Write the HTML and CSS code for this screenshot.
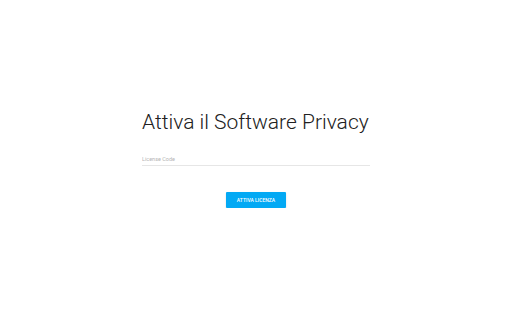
FILE: index.html
```html
<!DOCTYPE html>
<html lang="it">
<head>
    <meta charset="UTF-8">
    <meta name="viewport" content="width=device-width, initial-scale=1.0">
    <title>Attiva il Software Privacy</title>
    <link rel="stylesheet" href="styles.css">
</head>
<body>
    <div class="container">
        <h1>Attiva il Software Privacy</h1>
        <div class="field">
            <input type="text" id="licenseCode" placeholder="License Code">
        </div>
        <div class="actions">
            <button>Attiva licenza</button>
        </div>
    </div>
</body>
</html>
```

FILE: styles.css
```css
body {
    font-family: Roboto, "Noto Sans", sans-serif;
    background-color: #fff;
    color: #212121;
    margin: 0;
}
.container {
    width: 228px;
    margin: 0 auto;
    padding-top: 109px;
}
h1 {
    font-weight: 300;
    font-size: 21px;
    line-height: 26px;
    margin: 0;
    white-space: nowrap;
}
.field {
    margin-top: 21px;
}
input {
    display: block;
    width: 100%;
    box-sizing: border-box;
    border: none;
    border-bottom: 1px solid #e6e6e6;
    padding: 0 0 3px;
    font-family: inherit;
    font-size: 5.5px;
    color: #333;
    outline: none;
}
input::placeholder {
    color: #b5b5b5;
}
.actions {
    display: flex;
    justify-content: center;
    margin-top: 26px;
}
button {
    background-color: #03a9f4;
    color: #fff;
    border: none;
    width: 60px;
    height: 16px;
    padding: 0;
    border-radius: 1px;
    font-family: inherit;
    font-size: 5px;
    font-weight: 500;
    text-transform: uppercase;
    cursor: pointer;
    box-shadow: 0 1px 2px rgba(0, 0, 0, 0.15);
}
```
